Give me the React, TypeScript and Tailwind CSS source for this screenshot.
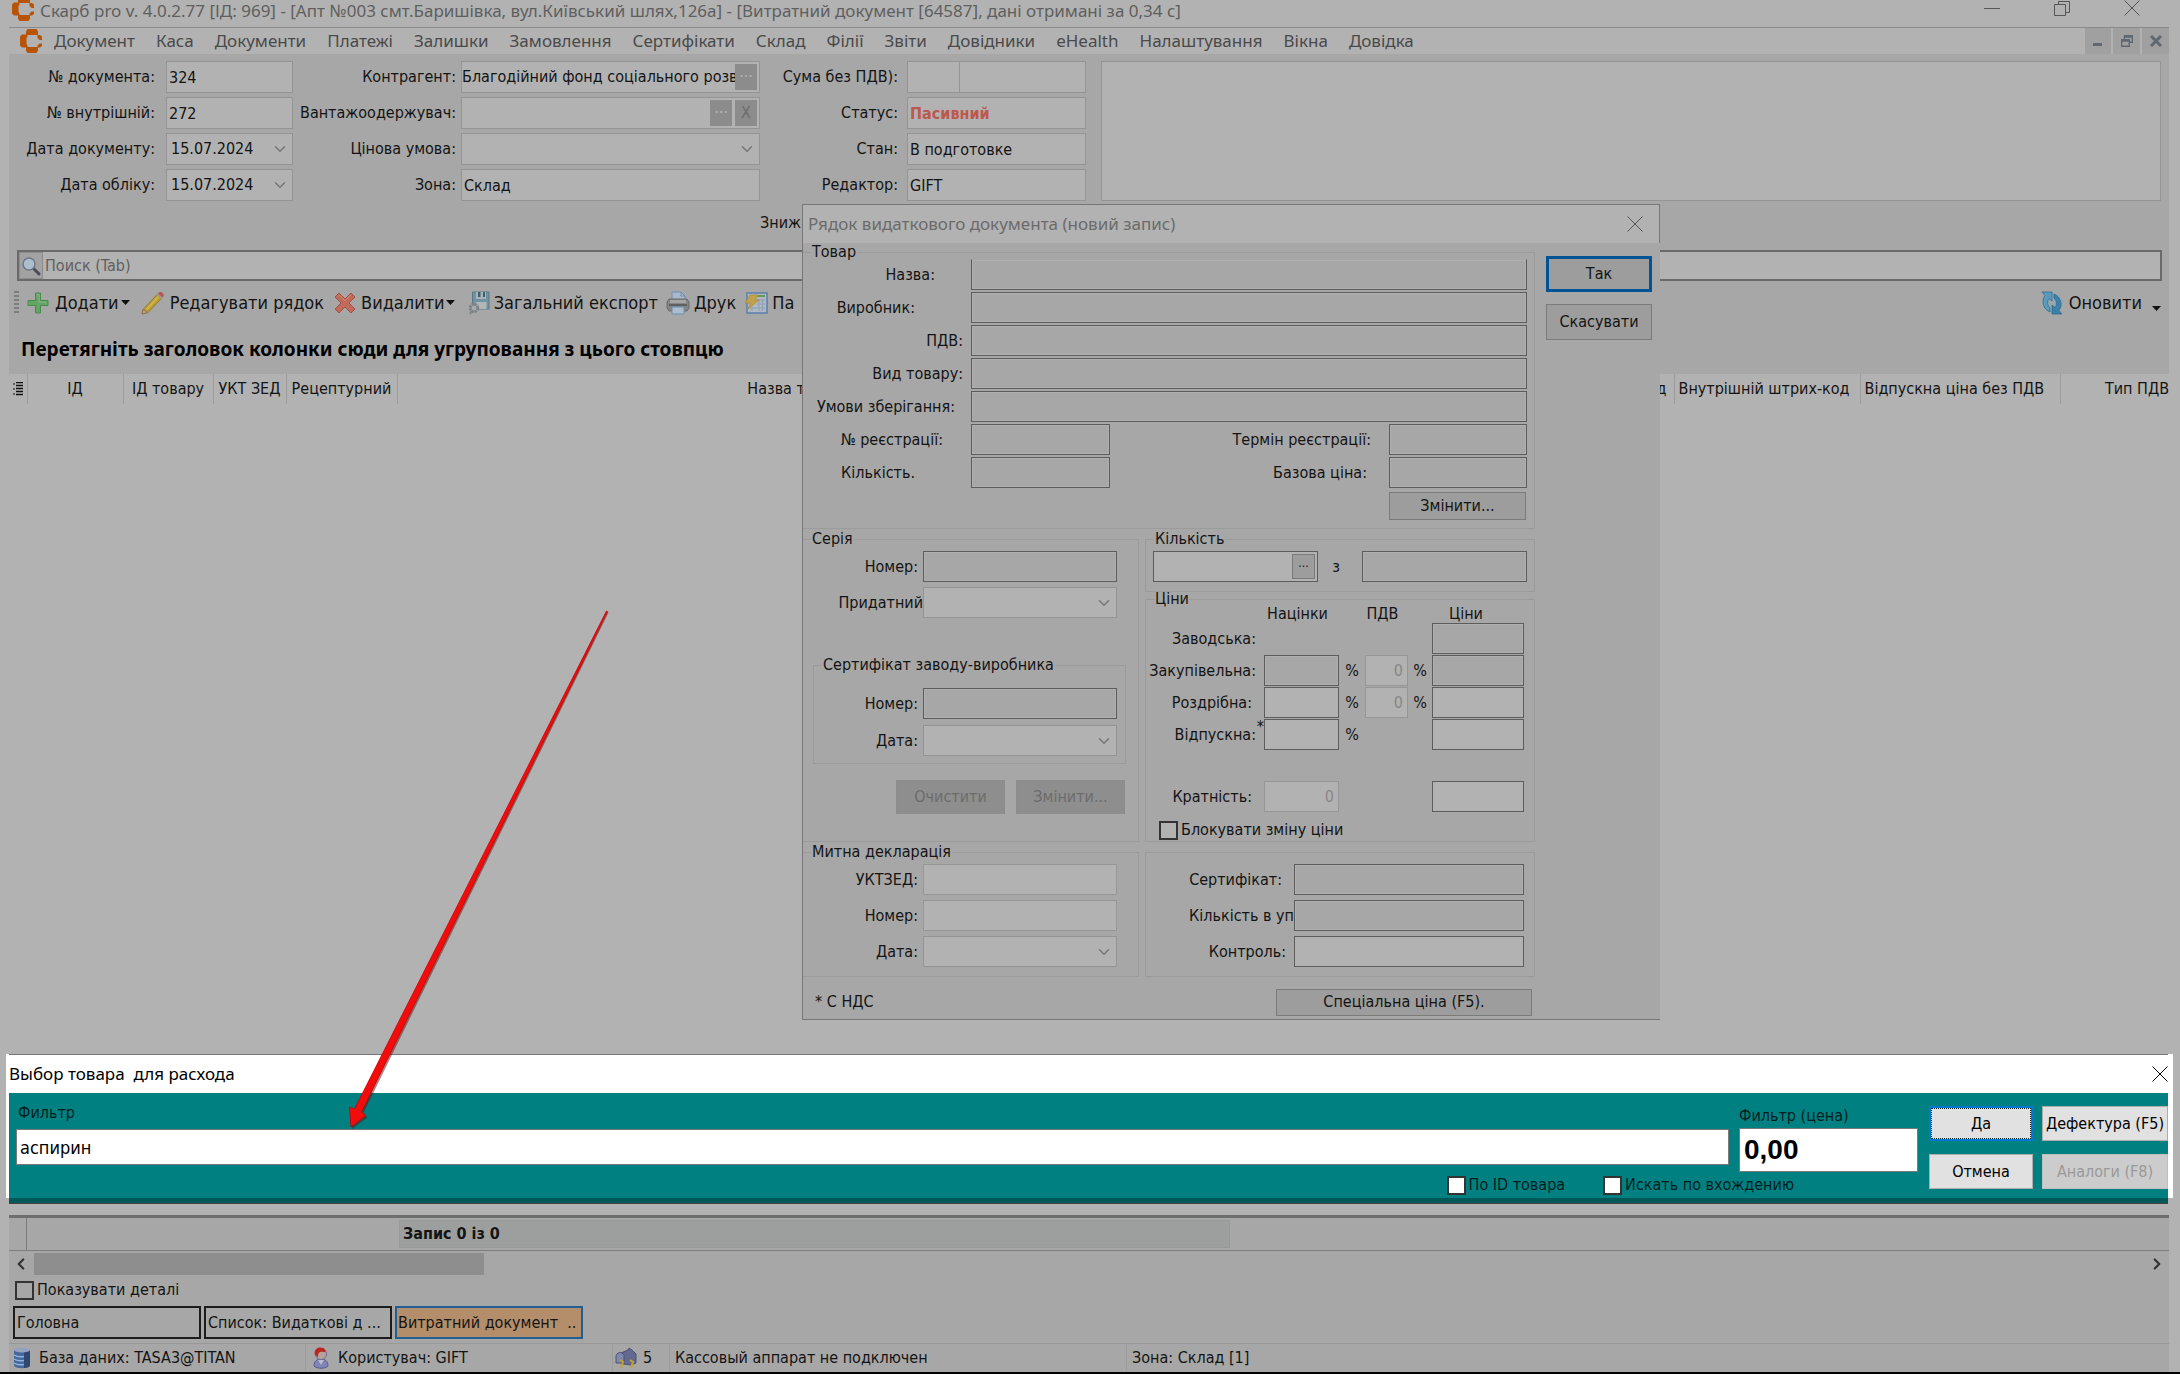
import { useState } from 'react';
import type { InputHTMLAttributes, ReactNode } from 'react';
import { ChevronDown, ChevronLeft, ChevronRight } from 'lucide-react';
import clsx from 'clsx';

const MENU = [
  'Документ', 'Каса', 'Документи', 'Платежі', 'Залишки', 'Замовлення', 'Сертифікати', 'Склад',
  'Філії', 'Звіти', 'Довідники', 'eHealth', 'Налаштування', 'Вікна', 'Довідка',
];

const PRODUCT_FIELDS = [
  { id: 'p-name', label: 'Назва:', pad: 'pr-9' },
  { id: 'p-maker', label: 'Виробник:', pad: 'pr-14' },
  { id: 'p-vat', label: 'ПДВ:', pad: 'pr-2' },
  { id: 'p-kind', label: 'Вид товару:', pad: 'pr-2' },
  { id: 'p-storage', label: 'Умови зберігання:', pad: 'pr-4' },
];

/* ---------- icons ---------- */

function Logo() {
  return (
    <svg className="h-6 w-[22px] shrink-0" viewBox="0 0 22 24" fill="#b85405">
      <path d="M7.500 0h9L18 2.500V6H6V2.500z" />
      <path d="M6 18h12v3.500L16.500 24h-9L6 21.500z" />
      <path d="M2 5.500h5.500v2L6.500 9v6l1 1.500v2H2L0 16.500v-9z" />
      <path d="M17.500 6H20l2 1.500V11h-2.500l-2-2z" />
      <path d="M19.500 14.500H22V17l-2 1.500h-2.500v-2z" />
    </svg>
  );
}

function CloseIcon({ color }: { color: string }) {
  return (
    <svg className="h-4 w-4" viewBox="0 0 16 16" stroke={color} strokeWidth="1" fill="none">
      <path d="M.5.5l15 15M15.500.5l-15 15" />
    </svg>
  );
}

function PlusIcon() {
  return (
    <svg className="h-[22px] w-[22px]" viewBox="0 0 22 22">
      <path d="M8.500 1h5v7.500H21v5h-7.500V21h-5v-7.500H1v-5h7.500z" fill="#64a464" stroke="#478c4c" strokeLinejoin="round" />
      <path d="M10 2.500h2v7.500h7.500" fill="none" stroke="#86b986" />
    </svg>
  );
}

function PencilIcon() {
  return (
    <svg className="h-6 w-6" viewBox="0 0 24 24">
      <path d="M2 18.500 16.500 3l4.500 4L7 21.500l-6 1.500z" fill="#b99b2e" stroke="#8c7630" strokeWidth=".8" />
      <path d="M4.500 18 17.500 4.500l1.500 1.200L6 19.500z" fill="#cdb554" />
      <path d="M1 23l1.200-4.800 4.600 3.400z" fill="#b99a83" stroke="#7d5f50" strokeWidth=".6" />
      <path d="M15.500 4l1.500-1.500 4.500 4L20 8z" fill="#999" />
      <path d="M17 2.500C18.500.5 20 .8 21.500 2s2 3 0 4.500z" fill="#b9584f" />
    </svg>
  );
}

function DeleteIcon() {
  return (
    <svg className="h-[22px] w-[22px]" viewBox="0 0 22 22">
      <path d="M5 1l6 6 6-6 4 4-6 6 6 6-4 4-6-6-6 6-4-4 6-6-6-6z" fill="#bf6a5a" stroke="#a84e42" strokeLinejoin="round" />
      <path d="M5 2.800l6 6 6-6" fill="none" stroke="#cf8a7b" />
    </svg>
  );
}

function ExportIcon() {
  return (
    <svg className="h-6 w-6" viewBox="0 0 24 24">
      <path d="M5.500 1h16.500v17h-12L5.500 14z" fill="#6f93a3" stroke="#587887" />
      <path d="M9 1h10v7H9z" fill="#a9b4b9" />
      <path d="M11 1h2.500v5H11zM16 1h2v5h-2z" fill="#3f5f70" />
      <path d="M8.500 11h11v7h-11z" fill="#b1b6b8" />
      <circle cx="7" cy="17" r="4" fill="none" stroke="#7c8488" strokeWidth="2.500" strokeDasharray="2.200 1" />
      <circle cx="7" cy="17" r="3" fill="#a7abad" stroke="#7c8488" />
      <path d="M3 23l2-3" stroke="#7c8488" strokeWidth="2" />
    </svg>
  );
}

function PrinterIcon() {
  return (
    <svg className="h-6 w-6" viewBox="0 0 24 24">
      <path d="M6 10V1h9l4 4v5z" fill="#a9b9c8" stroke="#6c8fb3" />
      <path d="M15 1v4h4" fill="none" stroke="#6c8fb3" />
      <path d="M3 8h18l2 3v6l-2 3H3l-2-3v-6z" fill="#858585" stroke="#6a6a6a" />
      <path d="M4 9h16v3H4z" fill="#a6a6a6" />
      <path d="M3 14h18" stroke="#555" strokeWidth="1.500" />
      <path d="M6 16h12v7H6z" fill="#aebdcb" stroke="#6c8fb3" />
    </svg>
  );
}

function FormIcon() {
  return (
    <svg className="h-6 w-6" viewBox="0 0 24 24">
      <rect x="3" y="2" width="20" height="20" fill="#b3b8bc" stroke="#5c7fae" strokeWidth="1.500" />
      <path d="M12 5h9" stroke="#669a5c" strokeWidth="2" />
      <path d="M13 9h8M13 13h8M6 17h15M15 8v12M18.500 8v12M8 16v4" stroke="#87a0bf" />
      <path d="M6 4h8l-3 5h4L4 18l2.500-6H1z" fill="#c3a24f" stroke="#a5863a" strokeWidth=".7" />
    </svg>
  );
}

function RefreshIcon() {
  return (
    <svg className="h-6 w-6" viewBox="0 0 24 24">
      <circle cx="13" cy="12" r="10" fill="#8fa6b3" opacity=".6" />
      <path d="M2 1h10v9L9 7.500C7 10 7 14 10 17v4C3 18 1 10 5 4.500z" fill="#5b9cbd" stroke="#2f6d94" strokeWidth=".8" />
      <path d="M22 23H12v-9l3 2.500c2-2.500 2-6.500-1-9.500V3c7 3 9 11 5 16.500z" fill="#3c81a8" stroke="#2f6d94" strokeWidth=".8" />
    </svg>
  );
}

function DatabaseIcon() {
  return (
    <svg className="h-[22px] w-[18px]" viewBox="0 0 18 22">
      <path d="M1 3v16c3 3 13 3 16 0V3z" fill="#46689c" />
      <path d="M11 4h6v15c-1.500 1.300-3.500 2-6 2z" fill="#2f466f" />
      <ellipse cx="9" cy="3" rx="8" ry="2.500" fill="#93a2bd" />
      <path d="M1 8c3 2 7 2 10 1.500M1 12c3 2 7 2 10 1.500M1 16c3 2 7 2 10 1.500" stroke="#8fb4dc" fill="none" strokeWidth="1.500" />
    </svg>
  );
}

function UserIcon() {
  return (
    <svg className="h-[22px] w-[18px]" viewBox="0 0 18 22">
      <path d="M2 19c0-5 3-7 7-7s7 2 7 7c-3 3-11 3-14 0z" fill="#7e85b3" stroke="#565d92" />
      <path d="M6 13l3 5 3-5z" fill="#b9bccd" />
      <circle cx="9" cy="7" r="5.500" fill="#b6a296" stroke="#6e6e9c" />
      <path d="M3 8C1 2 7-1 11 1c3 1 3 4 1 4-4-1-6 0-6 5z" fill="#b8281e" />
    </svg>
  );
}

function MailboxIcon() {
  return (
    <svg className="h-[22px] w-[22px]" viewBox="0 0 22 22">
      <path d="M6 6l7-3 1-2 3 2 4 4v9l-5 2-8-1-3-2z" fill="#626a92" stroke="#4b5275" />
      <path d="M1 10c0-5 6-6 8-2v8H1z" fill="#7f87ad" stroke="#4b5275" />
      <path d="M5 13l3 2-2 6M15 13l3 2-2 6" stroke="#c3a32c" strokeWidth="2" fill="none" />
    </svg>
  );
}

function ToolCaret() {
  return (
    <svg className="h-[5px] w-[9px]" viewBox="0 0 9 5">
      <path d="M0 0h9L4.500 5z" fill="#111" />
    </svg>
  );
}

/* ---------- controls ---------- */

type Tone = 'light' | 'gray' | 'dim';

type BoxProps = InputHTMLAttributes<HTMLInputElement> & { tone?: Tone };

function Box({ tone = 'gray', className, ...rest }: BoxProps) {
  return (
    <input
      type="text"
      className={clsx(
        'h-[31px] min-w-0 border px-1 outline-none',
        tone === 'light' && 'border-[#5c5c5c] bg-[#b2b2b2]',
        tone === 'gray' && 'border-[#5c5c5c] bg-[#a7a7a7] shadow-[inset_0_0_0_1px_#afafaf]',
        tone === 'dim' && 'border-[#969696] bg-[#b2b2b2] text-[#888]',
        className
      )}
      {...rest}
    />
  );
}

function Drop({ id, value, className }: { id: string; value?: string; className?: string }) {
  return (
    <div className={clsx('relative', className)}>
      <select id={id} className="h-full w-full appearance-none border border-[#949494] bg-[#b2b2b2] px-1 outline-none">
        <option>{value}</option>
      </select>
      <ChevronDown className="pointer-events-none absolute top-1/2 right-1 h-[18px] w-[18px] -translate-y-1/2 text-[#777]" />
    </div>
  );
}

function PushButton({ children, className, ...rest }: { children: ReactNode; className?: string; disabled?: boolean }) {
  return (
    <button
      type="button"
      className={clsx('border border-[#7b7b7b] bg-[#9d9d9d] disabled:border-[#8c8c8c] disabled:bg-[#8e8e8e] disabled:text-[#6c6c6c]', className)}
      {...rest}
    >
      {children}
    </button>
  );
}

function Group({ legend, className, children }: { legend?: string; className?: string; children: ReactNode }) {
  return (
    <fieldset className={clsx('min-w-0 border border-[#9b9b9b]', className)}>
      {legend && <legend className="ml-2 px-px leading-[14px]">{legend}</legend>}
      {children}
    </fieldset>
  );
}

function Check({ id, label, className }: { id: string; label: string; className?: string }) {
  return (
    <span className="flex items-center gap-[3px]">
      <input id={id} type="checkbox" className={clsx('h-[19px] w-[19px] appearance-none border-2', className)} />
      <label htmlFor={id}>{label}</label>
    </span>
  );
}

/* ---------- document header ---------- */

function HeadLabel({ id, children }: { id: string; children: ReactNode }) {
  return (
    <label htmlFor={id} className="text-right whitespace-nowrap">
      {children}
    </label>
  );
}

const headInput = 'h-8 w-full border border-[#949494] bg-[#b2b2b2] px-[2px] outline-none';

function DocumentForm() {
  return (
    <section className="flex pt-[7px] pr-2">
      <div className="grid auto-rows-[32px] grid-cols-[146px_127px] items-center gap-x-[11px] gap-y-1">
        <HeadLabel id="doc-no">№ документа:</HeadLabel>
        <input id="doc-no" className={headInput} defaultValue="324" />
        <HeadLabel id="doc-inner">№ внутрішній:</HeadLabel>
        <input id="doc-inner" className={headInput} defaultValue="272" />
        <HeadLabel id="doc-date">Дата документу:</HeadLabel>
        <Drop id="doc-date" value="15.07.2024" className="h-8" />
        <HeadLabel id="acc-date">Дата обліку:</HeadLabel>
        <Drop id="acc-date" value="15.07.2024" className="h-8" />
      </div>

      <div className="grid auto-rows-[32px] grid-cols-[163px_299px] items-center gap-x-[5px] gap-y-1">
        <HeadLabel id="partner">Контрагент:</HeadLabel>
        <div className="flex h-8 items-center border border-[#949494] bg-[#b2b2b2] pr-[2px]">
          <input id="partner" className="min-w-0 flex-1 outline-none" defaultValue="Благодійний фонд соціального розвитку" />
          <button className="h-[26px] w-[22px] bg-[#8c8c8c] text-[#b5b5b5]">···</button>
        </div>
        <HeadLabel id="consignee">Вантажоодержувач:</HeadLabel>
        <div className="flex h-8 items-center gap-[3px] border border-[#949494] bg-[#b2b2b2] pr-[2px]">
          <input id="consignee" className="min-w-0 flex-1 outline-none" />
          <button className="h-[26px] w-[22px] bg-[#8c8c8c] text-[#b5b5b5]">···</button>
          <button className="h-[26px] w-[22px] bg-[#8c8c8c] text-[#6c6c6c]">X</button>
        </div>
        <HeadLabel id="price-term">Цінова умова:</HeadLabel>
        <Drop id="price-term" className="h-8" />
        <HeadLabel id="zone">Зона:</HeadLabel>
        <input id="zone" className={headInput} defaultValue="Склад" />
      </div>

      <div className="grid auto-rows-[32px] grid-cols-[138px_179px] items-center gap-x-[9px] gap-y-1">
        <HeadLabel id="sum">Сума без ПДВ):</HeadLabel>
        <div className="flex">
          <input id="sum" className="h-8 w-[53px] border border-[#949494] bg-[#b2b2b2] px-1 outline-none" />
          <input aria-label="Сума" className="h-8 min-w-0 flex-1 border border-l-0 border-[#949494] bg-[#b2b2b2] px-1 outline-none" />
        </div>
        <HeadLabel id="status">Статус:</HeadLabel>
        <input id="status" className={clsx(headInput, 'font-bold text-[#bd584e]')} defaultValue="Пасивний" />
        <HeadLabel id="state">Стан:</HeadLabel>
        <input id="state" className={headInput} defaultValue="В подготовке" />
        <HeadLabel id="editor">Редактор:</HeadLabel>
        <input id="editor" className={headInput} defaultValue="GIFT" />
      </div>

      <textarea aria-label="Примітка" className="ml-[15px] flex-1 resize-none border border-[#949494] bg-[#b2b2b2] outline-none" />
    </section>
  );
}

function Toolbar() {
  return (
    <div className="flex h-[43px] items-center pr-2 pl-[5px] text-lg whitespace-nowrap">
      <span className="mr-2 h-6 w-[5px] bg-[repeating-linear-gradient(#7d7d7d_0_2px,#a7a7a7_2px_4px)]" />
      <button className="mr-[11px] flex items-center gap-[6px]">
        <PlusIcon />
        <span className="flex items-center gap-[2px]">Додати<ToolCaret /></span>
      </button>
      <button className="mr-[10px] flex items-center gap-[5px]"><PencilIcon />Редагувати рядок</button>
      <button className="mr-3 flex items-center gap-[5px]">
        <DeleteIcon />
        <span className="flex items-center gap-px">Видалити<ToolCaret /></span>
      </button>
      <button className="mr-2 flex items-center gap-[3px]"><ExportIcon />Загальний експорт</button>
      <button className="mr-2 flex items-center gap-1"><PrinterIcon />Друк</button>
      <button className="flex items-center gap-1"><FormIcon />Па</button>
      <button className="ml-auto flex items-center gap-[5px]"><RefreshIcon />Оновити</button>
      <button className="mt-3 ml-[10px]" aria-label="Параметри оновлення"><ToolCaret /></button>
    </div>
  );
}

function RowsHeader() {
  const cell = 'border-r border-[#9c9c9c] font-normal overflow-hidden';
  return (
    <table className="h-[30px] w-full table-fixed border-collapse bg-[#b2b2b2] whitespace-nowrap">
      <thead>
        <tr>
          <th className={clsx(cell, 'w-[18px]')}>
            <svg className="mx-auto h-[14px] w-[10px]" viewBox="0 0 10 14" stroke="#111">
              <path d="M3 .5h7M3 3.500h7M3 6.500h7M3 9.500h7M3 12.500h7" strokeWidth="1.700" />
              <path d="M0 2h2M0 7h2M0 12h2" />
            </svg>
          </th>
          <th className={clsx(cell, 'w-[96px]')}>ІД</th>
          <th className={clsx(cell, 'w-[90px]')}>ІД товару</th>
          <th className={clsx(cell, 'w-[73px]')}>УКТ ЗЕД</th>
          <th className={clsx(cell, 'w-[111px]')}>Рецептурний</th>
          <th className={clsx(cell, 'w-[802px]')}>Назва товару</th>
          <th className={clsx(cell, 'pr-[7px] text-right')}>Штрих-код</th>
          <th className={clsx(cell, 'w-[186px] pl-1 text-left')}>Внутрішній штрих-код</th>
          <th className={clsx(cell, 'w-[200px] pl-1 text-left')}>Відпускна ціна без ПДВ</th>
          <th className="w-[109px] text-right font-normal">Тип ПДВ</th>
        </tr>
      </thead>
    </table>
  );
}

/* ---------- row editor window ---------- */

function Row({ id, label, pad = 'pr-[5px]', className, children }: { id: string; label: string; pad?: string; className?: string; children: ReactNode }) {
  return (
    <div className="flex items-center">
      <label htmlFor={id} className={clsx('shrink-0 text-right whitespace-nowrap', pad, className)}>
        {label}
      </label>
      {children}
    </div>
  );
}

function PriceGroup() {
  return (
    <Group legend="Ціни" className="h-[250px]">
      <div className="grid grid-cols-[118px_75px_26px_43px_24px_92px] items-center gap-y-px">
        <span />
        <span className="pr-2 text-center leading-[16px]">Націнки</span>
        <span />
        <span className="pr-2 text-center leading-[16px]">ПДВ</span>
        <span />
        <span className="pr-6 text-center leading-[16px]">Ціни</span>

        <label htmlFor="pr-factory" className="pr-2 text-right">Заводська:</label>
        <Box id="pr-factory" className="col-start-6" />

        <label htmlFor="pr-buy" className="pr-2 text-right">Закупівельна:</label>
        <Box id="pr-buy" />
        <span className="text-center">%</span>
        <Box aria-label="ПДВ закупівельна" tone="dim" className="text-right" defaultValue="0" />
        <span className="text-center">%</span>
        <Box aria-label="Ціна закупівельна" />

        <label htmlFor="pr-retail" className="pr-3 text-right">Роздрібна:</label>
        <Box id="pr-retail" tone="light" />
        <span className="text-center">%</span>
        <Box aria-label="ПДВ роздрібна" tone="dim" className="text-right" defaultValue="0" />
        <span className="text-center">%</span>
        <Box aria-label="Ціна роздрібна" tone="light" />

        <label htmlFor="pr-sale" className="relative pr-2 text-right">
          Відпускна:<span className="absolute -top-2 right-0">*</span>
        </label>
        <Box id="pr-sale" tone="light" />
        <span className="text-center">%</span>
        <Box aria-label="Ціна відпускна" tone="light" className="col-start-6" />

        <label htmlFor="pr-mult" className="mt-[30px] pr-3 text-right">Кратність:</label>
        <Box id="pr-mult" tone="dim" className="mt-[30px] text-right" defaultValue="0" />
        <Box aria-label="Ціна за кратність" tone="light" className="col-start-6 mt-[30px]" />
      </div>
      <div className="mt-2 ml-[13px]">
        <Check id="lock-price" label="Блокувати зміну ціни" className="border-[#333] bg-[#b2b2b2]" />
      </div>
    </Group>
  );
}

function RowEditor() {
  return (
    <div role="dialog" aria-label="Рядок видаткового документа" className="absolute top-[204px] left-[802px] w-[858px] border-b border-l border-[#777] bg-[#a7a7a7]">
      <header className="flex h-[39px] items-center justify-between border-t border-r border-[#777] bg-[#b2b2b2] pr-4 pl-[5px] font-['Noto_Sans',sans-serif] text-[17px] text-[#6b6b6b]">
        <h2>Рядок видаткового документа (новий запис)</h2>
        <button aria-label="Закрити"><CloseIcon color="#555" /></button>
      </header>

      <div className="flex">
        <div className="w-[732px] pt-[2px]">
          <Group legend="Товар" className="border-l-0">
            <div className="flex flex-col gap-[2px]">
              {PRODUCT_FIELDS.map((f, i) => (
                <Row key={f.id} id={f.id} label={f.label} pad={f.pad} className="w-[168px]">
                  <Box id={f.id} className={clsx('w-[556px]', i === 0 && 'border-t-transparent')} />
                </Row>
              ))}
              <div className="flex">
                <Row id="p-reg" label="№ реєстрації:" pad="pr-7" className="w-[168px]">
                  <Box id="p-reg" className="w-[139px]" />
                </Row>
                <Row id="p-regterm" label="Термін реєстрації:" pad="pr-[18px]" className="w-[279px]">
                  <Box id="p-regterm" className="w-[138px]" />
                </Row>
              </div>
              <div className="flex">
                <Row id="p-qty" label="Кількість." pad="pr-14" className="w-[168px]">
                  <Box id="p-qty" className="w-[139px]" />
                </Row>
                <Row id="p-base" label="Базова ціна:" pad="pr-[22px]" className="w-[279px]">
                  <Box id="p-base" className="w-[138px]" />
                </Row>
              </div>
            </div>
            <div className="mt-1 mr-2 mb-2 flex justify-end">
              <PushButton className="h-7 w-[137px]">Змінити...</PushButton>
            </div>
          </Group>

          <div className="mt-[3px] grid grid-cols-[336px_390px] gap-x-[6px] gap-y-[3px]">
            <Group legend="Серія" className="border-l-0">
              <div className="flex flex-col gap-[5px] pt-[5px]">
                <Row id="s-no" label="Номер:" className="w-[120px]">
                  <Box id="s-no" className="w-[194px]" />
                </Row>
                <Row id="s-valid" label="Придатний" pad="pr-0" className="w-[120px]">
                  <Drop id="s-valid" className="h-[31px] w-[194px]" />
                </Row>
              </div>
              <Group legend="Сертифікат заводу-виробника" className="mt-10 mr-3 ml-[10px]">
                <div className="flex flex-col gap-[6px] pt-4 pb-[7px]">
                  <Row id="c-no" label="Номер:" className="w-[109px]">
                    <Box id="c-no" className="w-[194px]" />
                  </Row>
                  <Row id="c-date" label="Дата:" className="w-[109px]">
                    <Drop id="c-date" className="h-[31px] w-[194px]" />
                  </Row>
                </div>
              </Group>
              <div className="mt-4 mr-[13px] flex justify-end gap-[11px]">
                <PushButton disabled className="h-[34px] w-[109px]">Очистити</PushButton>
                <PushButton disabled className="h-[34px] w-[109px]">Змінити...</PushButton>
              </div>
            </Group>

            <div>
              <Group legend="Кількість">
                <div className="flex items-center pt-[5px] pb-[9px] pl-[7px]">
                  <div className="flex h-[31px] w-[165px] items-center border border-[#5c5c5c] bg-[#b2b2b2] pr-[2px]">
                    <input aria-label="Кількість" className="min-w-0 flex-1 px-1 outline-none" />
                    <PushButton className="h-[25px] w-[23px] text-xs">···</PushButton>
                  </div>
                  <label htmlFor="q-of" className="w-11 pr-2 text-center">з</label>
                  <Box id="q-of" className="w-[165px]" />
                </div>
              </Group>
              <PriceGroup />
            </div>

            <Group legend="Митна декларація" className="border-l-0">
              <div className="flex flex-col gap-[5px] pt-[5px] pb-[9px]">
                <Row id="m-code" label="УКТЗЕД:" className="w-[120px]">
                  <Box id="m-code" tone="dim" className="w-[194px]" />
                </Row>
                <Row id="m-no" label="Номер:" className="w-[120px]">
                  <Box id="m-no" tone="dim" className="w-[194px]" />
                </Row>
                <Row id="m-date" label="Дата:" className="w-[120px]">
                  <Drop id="m-date" className="h-[31px] w-[194px]" />
                </Row>
              </div>
            </Group>

            <Group className="mt-[7px]">
              <div className="flex flex-col gap-[5px] pt-[11px]">
                <Row id="x-cert" label="Сертифікат:" pad="pr-3" className="w-[148px]">
                  <Box id="x-cert" className="w-[230px]" />
                </Row>
                <Row id="x-pack" label="Кількість в уп" pad="pr-0" className="w-[148px]">
                  <Box id="x-pack" className="w-[230px]" />
                </Row>
                <Row id="x-ctrl" label="Контроль:" pad="pr-2" className="w-[148px]">
                  <Box id="x-ctrl" tone="light" className="w-[230px]" />
                </Row>
              </div>
            </Group>
          </div>

          <footer className="flex h-[42px] items-center justify-between pt-2 pr-[3px] pl-3">
            <span>* С НДС</span>
            <PushButton className="h-[27px] w-[256px]">Спеціальна ціна (F5).</PushButton>
          </footer>
        </div>

        <div className="flex flex-1 flex-col gap-3 pt-[13px] pr-2 pl-[11px]">
          <PushButton className="h-9 border-[3px] border-[#005394]">Так</PushButton>
          <PushButton className="h-9">Скасувати</PushButton>
        </div>
      </div>
    </div>
  );
}

/* ---------- product picker ---------- */

function ProductPicker() {
  const [filter, setFilter] = useState('аспирин');
  const button = 'h-[35px] shrink-0 border border-[#adadad] bg-[#e1e1e1] whitespace-nowrap text-black';

  return (
    <div role="dialog" aria-label="Выбор товара" className="absolute -right-1 bottom-[11px] -left-[3px]">
      <div className="bg-white">
        <header className="mr-[5px] ml-[3px] flex h-[39px] items-center justify-between border-t border-[#777] font-['Noto_Sans',sans-serif] text-[17px] text-black">
          <h2 className="whitespace-pre">Выбор товара  для расхода</h2>
          <button aria-label="Закрыть"><CloseIcon color="#000" /></button>
        </header>
        <div className="mr-[5px] ml-[3px] flex h-[105px] overflow-hidden bg-[#008080] pl-[7px] text-[#00201f]">
          <div className="min-w-0 flex-1">
            <div className="grid grid-cols-[1fr_179px] gap-x-[10px]">
              <div className="flex flex-col pt-[11px]">
                <label htmlFor="flt" className="pl-[2px] leading-[18px]">Фильтр</label>
                <input
                  id="flt"
                  value={filter}
                  onChange={(e) => setFilter(e.target.value)}
                  className="mt-[7px] h-9 border border-[#7a7a7a] bg-white px-[3px] text-lg text-black outline-none"
                />
              </div>
              <div className="flex flex-col pt-[14px]">
                <label htmlFor="flt-price" className="leading-[18px]">Фильтр (цена)</label>
                <input
                  id="flt-price"
                  defaultValue="0,00"
                  className="mt-[3px] h-11 border border-[#7a7a7a] bg-white px-1 font-['Liberation_Sans',sans-serif] text-[28px] font-bold text-black outline-none"
                />
              </div>
            </div>
            <div className="mt-[3px] flex h-5 justify-end gap-[38px] pr-[124px]">
              <Check id="by-id" label="По ID товара" className="border-[#333] bg-white" />
              <Check id="by-part" label="Искать по вхождению" className="border-[#333] bg-white" />
            </div>
          </div>
          <div className="ml-[11px] grid grid-cols-[104px_126px] content-start gap-x-[9px] gap-y-[13px] pt-[13px]">
            <button className="h-[35px] border-2 border-[#0078d7] bg-[#e1e1e1] text-black">
              <span className="flex h-full items-center justify-center border border-dotted border-[#222]">Да</span>
            </button>
            <button className={button}>Дефектура (F5)</button>
            <button className={button}>Отмена</button>
            <button disabled className="h-[35px] border border-[#bfbfbf] bg-[#cccccc] text-[#999]">Аналоги (F8)</button>
          </div>
        </div>
      </div>
      <div className="mr-[5px] ml-[3px] h-[6px] border-b border-[#444] bg-[#005858]" />
    </div>
  );
}

/* ---------- bottom bars ---------- */

function BottomBars() {
  return (
    <footer className="bg-[#a7a7a7] whitespace-nowrap">
      <div className="flex h-9 items-center border-t-[3px] border-b border-t-[#6e6e6e] border-b-[#7d7d7d]">
        <span className="h-full w-[18px] border-r border-[#7d7d7d]" />
        <span className="ml-[372px] flex h-7 w-[831px] items-center border border-[#999] bg-[#9c9f9d] px-[3px] font-bold">Запис 0 із 0</span>
      </div>
      <div className="flex h-[26px] items-center">
        <ChevronLeft className="mr-1 ml-[3px] h-[18px] w-[18px] text-[#333]" strokeWidth={3} />
        <span className="h-[22px] w-[450px] bg-[#8e8e8e]" />
        <ChevronRight className="mr-[3px] ml-auto h-[18px] w-[18px] text-[#333]" strokeWidth={3} />
      </div>
      <div className="flex h-[26px] items-center pl-[6px]">
        <Check id="details" label="Показувати деталі" className="border-[#333] bg-[#a7a7a7]" />
      </div>
      <nav className="mt-[3px] flex gap-[3px] pl-1">
        <button className="h-[33px] w-[188px] border-2 border-[#1c1c1c] px-[2px] text-left">Головна</button>
        <button className="h-[33px] w-[188px] border-2 border-[#1c1c1c] px-[2px] text-left">Список: Видаткові д ...</button>
        <button className="h-[33px] w-[188px] border-2 border-[#215f93] bg-[#b48d6a] px-px text-left whitespace-pre">Витратний документ  ..</button>
      </nav>
      <div className="mt-1 flex h-[29px] items-center border-t border-[#999]">
        <span className="flex h-full w-[297px] items-center gap-2 border-r border-[#9b9b9b] pl-1"><DatabaseIcon />База даних: TASA3@TITAN</span>
        <span className="flex h-full w-[307px] items-center gap-2 border-r border-[#9b9b9b] pl-[6px]"><UserIcon />Користувач: GIFT</span>
        <span className="flex h-full w-[57px] items-center gap-[6px] border-r border-[#9b9b9b] pl-[2px]"><MailboxIcon />5</span>
        <span className="flex h-full w-[457px] items-center border-r border-[#9b9b9b] pl-[5px]">Кассовый аппарат не подключен</span>
        <span className="pl-[5px]">Зона: Склад [1]</span>
      </div>
    </footer>
  );
}

export default function App() {
  return (
    <div className="relative flex min-h-screen flex-col overflow-hidden border-b-2 border-black bg-[#b2b2b2] pr-[11px] pl-[9px] font-['DejaVu_Sans_Condensed','DejaVu_Sans',sans-serif] text-base leading-5 text-[#141414]">
      <header className="flex h-7 items-start justify-between border-b border-[#8a8a8a] font-['Noto_Sans',sans-serif] text-[17px] text-[#5f5f5f]">
        <div className="flex items-start gap-[6px] pl-[3px]">
          <span className="-mt-[3px]"><Logo /></span>
          <h1 className="leading-[21px]">Скарб pro v. 4.0.2.77 [ІД: 969] - [Апт №003 смт.Баришівка, вул.Київський шлях,126а] - [Витратний документ [64587], дані отримані за 0,34 с]</h1>
        </div>
        <div className="flex gap-[54px] pr-[29px]">
          <button aria-label="Згорнути">
            <svg className="h-4 w-4" viewBox="0 0 16 16" stroke="#555"><path d="M0 8.500h16" /></svg>
          </button>
          <button aria-label="Відновити">
            <svg className="h-4 w-4" viewBox="0 0 16 16" stroke="#555" fill="none"><path d="M.5 4.500h11v11H.5zM4.500 4.500v-3h11v11h-3.500" /></svg>
          </button>
          <button aria-label="Закрити вікно"><CloseIcon color="#555" /></button>
        </div>
      </header>

      <nav className="flex h-[26px] items-center pl-[11px] font-['Noto_Sans',sans-serif] text-[17px] text-[#4a4a4a]">
        <Logo />
        <div className="ml-3 flex gap-[21px]">
          {MENU.map((m) => (
            <button key={m}>{m}</button>
          ))}
        </div>
        <div className="ml-auto flex gap-[2px] self-start text-[#5f6770]">
          <button aria-label="Згорнути документ" className="flex h-[26px] w-[26px] items-center justify-center bg-[#a0a0a0]">
            <svg className="h-3 w-3" viewBox="0 0 12 12"><path d="M1 8h9v3H1z" fill="currentColor" /></svg>
          </button>
          <button aria-label="Відновити документ" className="flex h-[26px] w-[27px] items-center justify-center bg-[#a0a0a0]">
            <svg className="h-3 w-3" viewBox="0 0 12 12" fill="none" stroke="currentColor" strokeWidth="1.400"><path d="M.7 4.700h7.600v6.600H.7zM.7 6h7.600M3.500 4V.8h7.800v6.500H8.500M3.500 2h7.800" /></svg>
          </button>
          <button aria-label="Закрити документ" className="flex h-[26px] w-[27px] items-center justify-center bg-[#a0a0a0]">
            <svg className="h-3 w-3" viewBox="0 0 12 12" stroke="currentColor" strokeWidth="3"><path d="M1 1l10 10M11 1L1 11" /></svg>
          </button>
        </div>
      </nav>

      <div className="bg-[#a7a7a7]">
        <DocumentForm />
        <div className="flex h-[49px] pt-3 pl-[751px]">Зниж</div>
        <div className="mr-[7px] ml-2 flex h-[31px] items-center border-2 border-[#6a6a6a] bg-[#b2b2b2]">
          <span className="flex h-full w-[24px] items-center justify-center border border-[#8d8d8d] bg-[#a2a2a2]">
            <svg className="h-5 w-5" viewBox="0 0 20 20">
              <path d="M12 12l6 6" stroke="#4c4c58" strokeWidth="3" strokeLinecap="round" />
              <circle cx="8" cy="8" r="6" fill="#aebdd0" stroke="#6f7684" strokeWidth="1.500" />
            </svg>
          </span>
          <input aria-label="Поиск" placeholder="Поиск (Tab)" className="flex-1 px-[2px] text-base outline-none placeholder:text-[#5f5f5f]" />
        </div>
        <Toolbar />
        <p className="flex h-[50px] items-center pl-3 font-['Noto_Sans',sans-serif] text-[19px] font-bold text-black">
          Перетягніть заголовок колонки сюди для угруповання з цього стовпцю
        </p>
      </div>
      <main className="relative flex-1">
        <RowsHeader />
        <ProductPicker />
      </main>
      <BottomBars />

      <RowEditor />

      {/* pointer to the filter box */}
      <svg className="pointer-events-none absolute top-[610px] left-[345px] h-[520px] w-[266px]" viewBox="0 0 266 520">
        <path d="M261.500 1l1 .6L17 503l4.500 3.500L6 518 5 498l4.500 1.500z" transform="translate(1 1)" fill="#5a1414" opacity=".5" />
        <path d="M261.500 1l1 .6L16.500 502l4.500 3.500L6 517 4.500 497l5 2z" fill="#f30c0c" stroke="#c80000" strokeWidth=".8" />
      </svg>
    </div>
  );
}
